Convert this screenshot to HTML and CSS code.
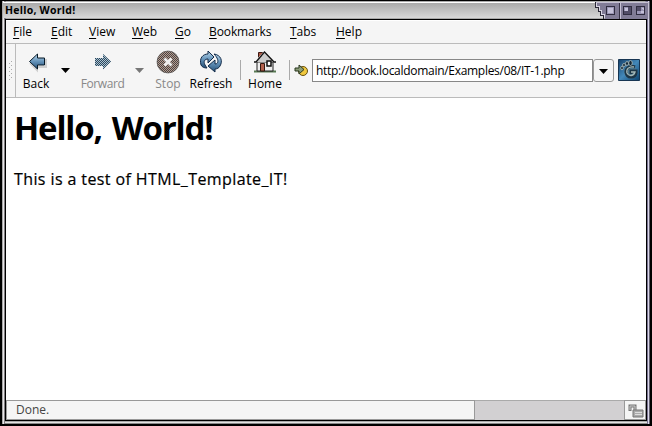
FILE: index.html
```html
<!DOCTYPE html>
<html lang="en"><head><meta charset="utf-8"><title>Hello, World!</title><link rel="stylesheet" href="styles.css"></head>
<body>
<div class="window">
<header class="titlebar"><span class="title">Hello, World!</span>
<svg class="controls" width="55" height="17" shape-rendering="crispEdges"><path d="M1 0h54v17H11v-4H8V9H6V5H3V0z" fill="#817c96"/><path d="M1.500 0v5h3v4h2v4h3v4" fill="none" stroke="#292735"/><path d="M2.500 0v4h3v4h2v4h3v4" fill="none" stroke="#dad7e4"/><path d="M25.500 0v17" stroke="#373346"/><path d="M26.500 0v17M2 .5h52.500v17" stroke="#c6c1d4" fill="none"/><g fill="#9b96b5" stroke="#302d40"><path d="M12.500 4.500h8v8h-8zM29.500 4.500h8v8h-8zM42.500 4.500h8v8h-8z"/></g><path d="M14 6h5v5h-5M31 6h3v3h-3M47 6h3v5h-3V9h3" fill="#c4c1d8"/><path d="M34 5h3v7h-7V9h4M43 5h4v4h-4" fill="#514c66"/></svg></header>
<main class="frame">
<nav class="menu"><span><u>F</u>ile</span><span><u>E</u>dit</span><span><u>V</u>iew</span><span><u>W</u>eb</span><span><u>G</u>o</span><span><u>B</u>ookmarks</span><span><u>T</u>abs</span><span><u>H</u>elp</span></nav>
<div class="toolbar">
<div class="grip"><svg width="6" height="20" fill="#aaa" shape-rendering="crispEdges"><path d="M3 0h1v1H3zM1 2h1v1H1zM3 4h1v1H3zM1 6h1v1H1zM3 8h1v1H3zM1 10h1v1H1zM3 12h1v1H3zM1 14h1v1H1zM3 16h1v1H3zM1 18h1v1H1z"/></svg></div>
<div class="tool back"><svg width="24" height="24" viewBox="0 0 24 24"><defs><linearGradient id="blue" x2="0" y2="1"><stop stop-color="#b9d8ed"/><stop offset=".5" stop-color="#6593b9"/><stop offset="1" stop-color="#244f77"/></linearGradient></defs><path d="M6 13l7 7v-3h9v-8" fill="none" stroke="#d0d0d0" stroke-width="2"/><path d="M5.500 11.500l8-7.500v4h7v7h-7v4z" fill="url(#blue)" stroke="#071927"/></svg><span>Back</span></div>
<div class="drop"><svg width="9" height="5"><path d="M0 0h9L4.500 5z"/></svg></div>
<div class="tool forward dim"><svg width="24" height="24" viewBox="0 0 24 24"><defs><pattern id="mesh" width="2" height="2" patternUnits="userSpaceOnUse"><path d="M0 0h1v1H0zM1 1h1v1H1z" fill="#30485b"/></pattern></defs><path d="M20 11.500L12 4v4H4v8h8v3.500z" fill="#a9c3d4"/><path d="M20 11.500L12 4v4H4v8h8v3.500z" fill="url(#mesh)"/></svg><span>Forward</span></div>
<div class="drop second"><svg width="9" height="5"><path d="M0 0h9L4.500 5z" fill="#777"/></svg></div>
<div class="tool stop dim"><svg width="24" height="24"><defs><pattern id="dots" width="2" height="2" patternUnits="userSpaceOnUse"><path d="M0 0h1v1H0zM1 1h1v1H1z" fill="#464646"/></pattern></defs><circle cx="12" cy="12" r="11" fill="#b99a8d"/><circle cx="12" cy="12" r="11" fill="url(#dots)" stroke="#555" stroke-width=".7"/><path d="M8.500 8.500l7 7m0-7l-7 7" stroke="#eee" stroke-width="2.800"/></svg><span>Stop</span></div>
<div class="tool refresh"><svg width="24" height="24"><g stroke="#132b49" fill="url(#blue)"><path d="M2 15C0 8 4 4 9 4V1l6 6-6 6V9c-3 0-5 2-3 6l2 3c-3 0-5-1-6-3z"/><path d="M15 4c7 1 9 7 6 12-1 2-3 3-5 3v3l-7-6 7-6v4c4 0 4-5-1-10z"/></g></svg><span>Refresh</span></div>
<div class="separator"></div>
<div class="tool home"><svg width="24" height="24"><path d="M1 21.500h22" stroke="#577953" stroke-width="2"/><path d="M4 12h16v9H4z" fill="#eee" stroke="#222"/><path d="M5.500 8V2.500h4V5" fill="#ad5a43" stroke="#3e1914"/><path d="M1 12L11.500 1 23 12z" fill="#eee"/><path d="M4 11h16M6 9h12M8 7h8M10 5h4" stroke="#aaa"/><path d="M1 12h2L11.500 2 21 12h2" fill="none" stroke="#111" stroke-width="1.300"/><path d="M7.500 13.500h4V21h-4z" fill="#b3614d" stroke="#331810"/><path d="M14 11h4v5h-4z" fill="#fff" stroke="#111" stroke-width="1.500"/></svg><span>Home</span></div>
<div class="separator last"></div>
<svg class="sitemark" width="14" height="13"><circle cx="9" cy="7" r="4.500" fill="#f0c83e" stroke="#665111"/><path d="M1 4h4V1l5 4.500L5 10V7H1z" fill="#8a9c78" stroke="#29371e"/></svg>
<div class="address"><span>http://book.localdomain/Examples/08/IT-1.php</span></div><div class="choose"><svg width="9" height="5"><path d="M0 0h9L4.500 5z"/></svg></div>
<svg class="brand" width="22" height="22"><defs><linearGradient id="sea" x2="1" y2="1"><stop stop-color="#143f69"/><stop offset=".5" stop-color="#4388b9"/><stop offset="1" stop-color="#0b426e"/></linearGradient></defs><path d="M.5.5h21v21H.5z" fill="url(#sea)" stroke="#173552"/><circle cx="12.500" cy="13" r="6.500" fill="#4d7890"/><path d="M17 8c-5-2-9 1-9 5 1 7 9 6 10 1v-2h-5v3" fill="none" stroke="#1c3546" stroke-width="3"/><path d="M16 8c-5-1-8 2-7 6 2 4 7 3 8-1h-4" fill="none" stroke="#a5b8b7" stroke-width="1.300"/><g fill="#132839" stroke="#c0c8c1" stroke-width=".7"><ellipse cx="4" cy="9" rx="1.300" ry="1.800"/><circle cx="6" cy="6" r="1.500"/><ellipse cx="9" cy="4.500" rx="1.500" ry="2"/><ellipse cx="12.500" cy="4" rx="1.800" ry="2.500"/></g></svg>
</div>
<article class="page"><h1><span>Hello, World!</span></h1><p><span>This is a test of HTML_Template_IT!</span></p></article>
<footer class="status"><div class="message">Done.</div><div class="progress"></div><div class="lock"><svg width="16" height="14"><path d="M2 7V2h5v5" fill="none" stroke="#777" stroke-width="3"/><path d="M2 6V2h5v5" fill="none" stroke="#ccc"/><path d="M5 6h10v7H5z" fill="#aaa" stroke="#777"/><path d="M7 8.500h7M7 10.500h7" stroke="#ddd"/></svg></div></footer>
</main></div>
</body></html>
```
FILE: styles.css
```css
*{box-sizing:border-box}
body{margin:0;background:#000;overflow:hidden;font:12px/16px "Open Sans","Noto Sans",sans-serif;color:#000}
svg{display:block;flex:none}
.window{width:652px;height:426px;padding:2px 2px 3px;border:solid #000;border-width:1px 2px 2px 1px;background:linear-gradient(90deg,#000 0 1px,#aaa 1px 2px,#e8e5e8 2px 3px,#827f82 3px 5px,#aaa 5px 644px,#777190 645px 647px,#dcd9e9 647px 648px,#626071 648px)}
.titlebar{height:16px;margin:-1px 0 0;display:flex;justify-content:space-between;background:linear-gradient(#fff 0 1px,#aaa 1px,#d8d8d8)}
.title{font:bold 10.500px/17px "Open Sans",sans-serif;letter-spacing:.25px;padding-left:2px;white-space:nowrap}
.controls{margin-right:-1px}
.frame{width:642px;height:402px;margin:1px 0 0 2px;border:1px solid #000;background:#f5f5f5;box-shadow:0 1px #aaa,0 2px #e4e4e4,0 3px #888}
.menu{height:24px;display:flex;border-bottom:1px solid #bbb;border-top:1px solid #fff;padding:3px 0 0 7px;white-space:nowrap}
.menu u{text-underline-offset:2px;text-decoration-thickness:1px}
.menu span{flex:none;width:38px}.menu span:nth-child(3){width:43px}.menu span:nth-child(4){width:43px}.menu span:nth-child(5){width:34px}.menu span:nth-child(6){width:81px}.menu span:nth-child(7){width:46px}
.menu span:nth-child(6){letter-spacing:-.1px}
.toolbar{height:54px;display:flex;border-bottom:1px solid #bbb}
.grip{width:10px;border-right:1px solid #bbb;padding:17px 0 0 2px}
.tool{display:flex;flex-direction:column;align-items:center;height:53px;padding-top:6px;white-space:nowrap;line-height:20px}
.back{width:40px}.drop{width:17px;padding:24px 0 0 5px}
.forward{width:59px;letter-spacing:-.4px}.second{width:15px;padding-left:3px}.stop{width:42px}.refresh{width:44px}
.dim{color:#888}.separator{width:1px;height:20px;margin-top:16px;background:#aaa}
.refresh{margin-left:0;margin-right:7px}.home{width:48px}.sitemark{margin:20px 0 0 4px}
.address{width:281px;height:23px;margin:15px 0 0 4px;border:1px solid #888;background:#fff;padding:3px;letter-spacing:-.29px;white-space:nowrap}
.choose{width:21px;height:23px;margin:15px 0 0;border:1px solid #999;border-radius:3px;padding:9px 0 0 5px}
.brand{margin:15px 0 0 4px}
.page{height:302px;background:#fff;padding:8px;overflow:hidden;white-space:nowrap}
.page h1{font:bold 33px/44px "Open Sans",sans-serif;letter-spacing:-1.15px;word-spacing:2.500px;margin:0}
.page p{font:16px/24px "Open Sans",sans-serif;letter-spacing:.4px;margin:17px 0 0;-webkit-text-stroke:.2px #000}
.status{height:20px;display:flex;color:#444}
.message{width:469px;border:1px solid #999;padding:0 9px;line-height:17px}
.progress{width:149px;background:#d2d0d2;border-top:1px solid #aaa}
.lock{width:22px;border:1px solid #999;padding:3px 0 0 3px}
```
